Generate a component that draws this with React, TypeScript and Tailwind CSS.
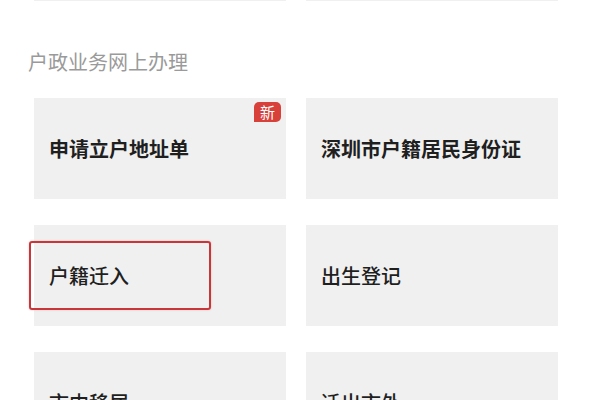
import React from 'react';

interface Item {
  title: string;
  isNew?: boolean;
  highlighted?: boolean;
}

const rows: Item[][] = [
  [{ title: '申请立户地址单', isNew: true }, { title: '深圳市户籍居民身份证' }],
  [{ title: '户籍迁入', highlighted: true }, { title: '出生登记' }],
  [{ title: '市内移居' }, { title: '迁出市外' }],
];

const font = { fontFamily: '"Noto Sans CJK SC", "Noto Sans", sans-serif' };

function Card({ item, bold }: { item: Item; bold: boolean }) {
  return (
    <div className="relative h-[101px] bg-[#f0f0f0] flex items-center pl-[15px]">
      <span className={`text-[20px] leading-[28px] text-[#1f1f1f] ${bold ? 'font-bold' : 'font-medium'}`}>
        {item.title}
      </span>
      {item.isNew && (
        <span className="absolute top-[4px] right-[5px] w-[27px] h-[20px] bg-[#d8413a] text-white text-[15px] leading-[20px] text-center rounded-[5px] rounded-bl-none">
          新
        </span>
      )}
      {item.highlighted && (
        <div className="absolute left-[-5px] top-[16px] w-[182px] h-[69px] border-2 border-[#c8363a] rounded-[3px] shadow-[0_0_2px_rgba(200,54,58,0.3)]" />
      )}
    </div>
  );
}

export default function App() {
  return (
    <div className="w-[600px] h-[400px] overflow-hidden bg-white flex flex-col" style={font}>
      {/* previous section, cut off at the top */}
      <div className="grid grid-cols-[252px_252px] gap-x-[20px] pl-[34px] mt-[-99px]">
        <div className="h-[100px] bg-[#f0f0f0]" />
        <div className="h-[100px] bg-[#f0f0f0]" />
      </div>

      <h2 className="mt-[47px] pl-[28px] text-[20px] leading-[28px] font-normal text-[#9a9a9a]">
        户政业务网上办理
      </h2>

      <div className="grid grid-cols-[252px_252px] gap-x-[20px] gap-y-[26px] pl-[34px] mt-[22px]">
        {rows.map((row, ri) =>
          row.map((item, ci) => <Card key={`${ri}-${ci}`} item={item} bold={ri === 0} />)
        )}
      </div>
    </div>
  );
}
